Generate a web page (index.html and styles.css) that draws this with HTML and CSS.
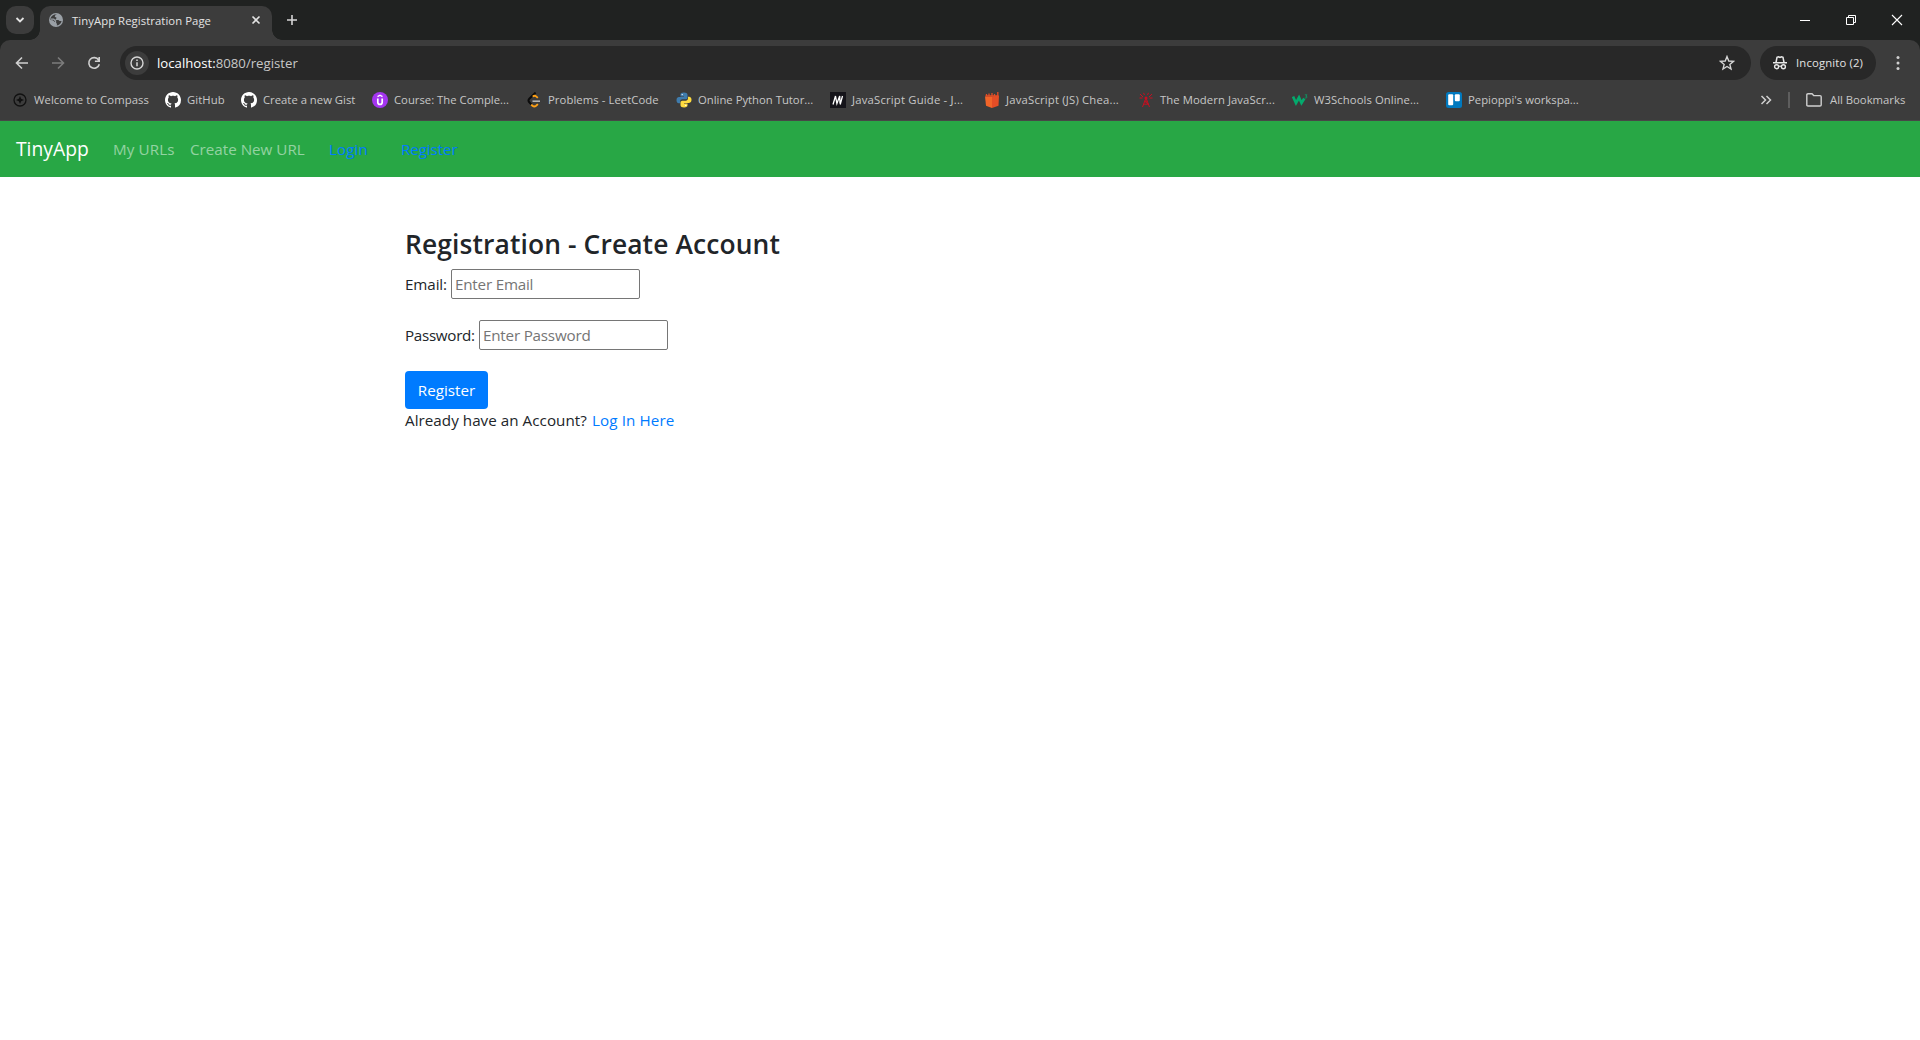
FILE: index.html
```html
<!DOCTYPE html>
<html lang="en">
<head>
<meta charset="utf-8">
<title>TinyApp Registration Page</title>
<link rel="stylesheet" href="styles.css">
</head>
<body>
<div class="browser">
  <div class="tabstrip">
    <div class="tab-search"><svg width="28" height="28" viewBox="0 0 28 28"><path d="M10.5 12l3.5 3.5 3.5-3.5" fill="none" stroke="#e3e3e3" stroke-width="1.8"/></svg></div>
    <div class="tab">
      <svg width="16" height="16" viewBox="0 0 16 16"><circle cx="8" cy="8" r="7" fill="#9aa0a6"/><path d="M8.8 2.5c-1 .6-2.2.9-2 1.9.1 1 1.9.4 1.7 1.6-.1 1-1.1.9-1.1 2h2.7c1.1 0 1 1.1 1.9 1.1h1.6c-.5 2.300-2.200 4.200-4.800 4.500v-1.900c-1.100 0-1.200-.6-1.200-1.500-1.500 0-1.600-1.700-3-1.900l-2.200-.2C2.200 4.600 5 1.900 8.800 2.500z" fill="#3c3c3c"/><path d="M2.700 7.200h2.800c1.100 0 .9 1.600 2 1.600v2c-.1 1 1 .8 1 1.800" fill="none" stroke="#9aa0a6" stroke-width="1.300"/></svg>
      <span class="tab-title">TinyApp Registration Page</span>
      <svg class="tab-close" width="10" height="10" viewBox="0 0 10 10"><path d="M1.500 1.500l7 7m0-7l-7 7" stroke="#e3e3e3" stroke-width="1.600"/></svg>
    </div>
    <svg class="new-tab" width="12" height="12" viewBox="0 0 12 12"><path d="M6 1v10M1 6h10" stroke="#d6d6d6" stroke-width="1.600"/></svg>
    <div class="window-buttons">
      <svg width="12" height="12" viewBox="0 0 12 12"><path d="M1 6.500h10" stroke="#fff"/></svg>
      <svg width="12" height="12" viewBox="0 0 12 12"><path d="M1.500 3.500h7v7h-7zM3.500 3.500v-2h7v7h-2" fill="none" stroke="#fff"/></svg>
      <svg width="12" height="12" viewBox="0 0 12 12"><path d="M1 1l10 10M11 1L1 11" stroke="#fff" stroke-width="1.100"/></svg>
    </div>
  </div>

  <div class="chrome-panel">
    <div class="toolbar">
      <div class="nav-buttons">
        <svg width="14" height="14" viewBox="0 0 14 14"><path d="M13 7H2M7 1.500L1.500 7 7 12.500" fill="none" stroke="#d0d0d0" stroke-width="1.600"/></svg>
        <svg width="14" height="14" viewBox="0 0 14 14"><path d="M1 7h11M7 1.500L12.500 7 7 12.500" fill="none" stroke="#7c7c7c" stroke-width="1.600"/></svg>
        <svg width="14" height="14" viewBox="0 0 14 14"><path d="M11.600 4A5.300 5.300 0 1 0 12.300 8.200M12.200 1v4.300H7.900" fill="none" stroke="#d0d0d0" stroke-width="1.600"/></svg>
      </div>
      <div class="omnibox">
        <span class="site-info"><svg width="14" height="14" viewBox="0 0 14 14"><circle cx="7" cy="7" r="6" fill="none" stroke="#d6d6d6" stroke-width="1.400"/><path d="M7 6.200v4M7 3.500v1.500" stroke="#d6d6d6" stroke-width="1.500"/></svg></span>
        <span class="url"><span class="host">localhost:</span>8080/register</span>
        <svg class="star" width="16" height="16" viewBox="0 0 16 16"><path d="M8 1.500l1.750 4.500 4.850.3-3.750 3.100 1.200 4.700L8 11.500l-4.050 2.600 1.200-4.700L1.400 6.300l4.850-.3z" fill="none" stroke="#d6d6d6" stroke-width="1.350"/></svg>
      </div>
      <div class="incognito">
        <svg width="14" height="14" viewBox="0 0 14 14"><path d="M0 6.700h14M3 6.500l1-5.200 1.500-.5 1.500.7 1.500-.7 1.500.5 1 5.200" fill="none" stroke="#e8e8e8" stroke-width="1.500"/><circle cx="3.600" cy="10.700" r="2" fill="none" stroke="#e8e8e8" stroke-width="1.400"/><circle cx="10.400" cy="10.700" r="2" fill="none" stroke="#e8e8e8" stroke-width="1.400"/><path d="M5.600 10.200h2.800" stroke="#e8e8e8" stroke-width="1.200"/></svg>
        <span>Incognito (2)</span>
      </div>
      <svg class="kebab" width="4" height="16" viewBox="0 0 4 16"><g fill="#d0d0d0"><circle cx="2" cy="2.500" r="1.500"/><circle cx="2" cy="8" r="1.500"/><circle cx="2" cy="13.500" r="1.500"/></g></svg>
    </div>

    <div class="bookmarks">
      <div class="bookmark-list">
        <div class="bookmark"><svg viewBox="0 0 16 16"><circle cx="8" cy="8" r="6" fill="none" stroke="#111" stroke-width="1.300"/><path d="M8 4l1.200 2.800L12 8 9.200 9.200 8 12 6.800 9.200 4 8l2.800-1.200z" fill="#111"/></svg><span class="loose">Welcome to Compass</span></div>
        <div class="bookmark"><svg viewBox="0 0 16 16"><use href="#github"/></svg><span class="loose">GitHub</span></div>
        <div class="bookmark"><svg viewBox="0 0 16 16"><path id="github" fill="#fff" d="M8 0C3.580 0 0 3.580 0 8c0 3.540 2.290 6.530 5.470 7.590.4.070.55-.17.55-.38 0-.19-.010-.82-.010-1.490-2.010.37-2.530-.49-2.690-.94-.090-.23-.48-.94-.82-1.130-.28-.15-.68-.52-.010-.53.63-.010 1.080.58 1.230.82.72 1.210 1.870.87 2.330.66.070-.52.28-.87.510-1.070-1.780-.2-3.640-.89-3.640-3.950 0-.87.310-1.590.82-2.150-.080-.2-.36-1.020.080-2.120 0 0 .67-.21 2.200.82.640-.18 1.320-.27 2-.27s1.360.090 2 .27c1.530-1.040 2.200-.82 2.200-.82.440 1.100.160 1.920.080 2.120.51.56.82 1.270.82 2.150 0 3.070-1.870 3.750-3.650 3.950.29.25.54.73.54 1.480 0 1.070-.010 1.930-.010 2.200 0 .21.15.46.55.38A8 8 0 0 0 16 8c0-4.420-3.580-8-8-8z"/></svg><span>Create a new Gist</span></div>
        <div class="bookmark"><svg viewBox="0 0 16 16"><circle cx="8" cy="8" r="8" fill="#a435f0"/><path d="M5.500 4.600L8 3.200l2.500 1.400" fill="none" stroke="#fff" stroke-width="1.300"/><path d="M5.800 6.500v3.700c0 3 4.400 3 4.400 0V6.500" fill="none" stroke="#fff" stroke-width="1.700"/></svg><span>Course: The Comple...</span></div>
        <div class="bookmark"><svg viewBox="0 0 16 16"><path d="M9.600.6L3.300 6.800q-1.600 1.700 0 3.400l2.200 2.400" fill="none" stroke="#0b0b0b" stroke-width="2"/><path d="M6.800 4.700q1.700-1.700 3.300-.3l1.700 1.500M5.200 12.600l1.300 1.200q1.800 1.400 3.600 0l1.800-1.700" fill="none" stroke="#ffa116" stroke-width="1.900"/><path d="M6.500 9.200H14" stroke="#b3b3b3" stroke-width="1.600"/></svg><span class="loose">Problems - LeetCode</span></div>
        <div class="bookmark"><svg viewBox="0 0 16 16"><path d="M7.900.5C5.400.5 4.500 1.400 4.500 2.700v1.700H8v.7H3C1.300 5.100.5 6.400.5 8.200c0 1.900 1 3 2.300 3h1.300V9.400c0-1.300 1-2.200 2.200-2.200h3.500c1 0 1.700-.8 1.700-1.800V2.700C11.500 1.200 10 .5 7.900.5z" fill="#3f7cad"/><path d="M15.500 7.800c0-1.800-.8-3.100-2.500-3.100h-1v1.900c0 1.200-1 2.200-2.200 2.200H6.300c-1 0-1.800.8-1.800 1.800v2.700c0 1.500 1.500 2.200 3.600 2.200 2.500 0 3.400-.9 3.400-2.200v-1.700H8v-.7h5c1.700 0 2.500-1.300 2.500-3.100z" fill="#ffdb3f"/><circle cx="6.200" cy="2.600" r=".7" fill="#fff"/><circle cx="9.800" cy="13.400" r=".7" fill="#fff"/></svg><span>Online Python Tutor...</span></div>
        <div class="bookmark"><svg viewBox="0 0 16 16"><path d="M0 0h16v16H0z" fill="#15141a"/><path d="M3 12.500L5.500 4l1.400 7.500L9.700 4l.3 7.500M10.200 12.500l2.300-8.500" fill="none" stroke="#fff" stroke-width="1.300"/></svg><span class="wide">JavaScript Guide - J...</span></div>
        <div class="bookmark"><svg viewBox="0 0 16 16"><path d="M1 4.500h7V16l-6-2.300z" fill="#f16529"/><path d="M8 4.500l7-1-.5 10.300L8 16z" fill="#e44d26"/><path d="M2.500 4V2M5 4V1.500M8 4V1M10.500 4V2M13.800 4V0M1.500 4h12" stroke="#e44d26" stroke-width="1.300"/></svg><span class="wide">JavaScript (JS) Chea...</span></div>
        <div class="bookmark"><svg viewBox="0 0 16 16"><path d="M8 6L4.500 15M8 6l3.500 9M6.500 9.200h3M5.500 12.200h5M6.500 9.200l4 3M2 2l3 3M14 2l-3 3M1.500 6h3M14.500 6h-3M5.500.8l1 2.200M10.500.8l-1 2.200" stroke="#c70f20" stroke-width="1" fill="none"/><circle cx="8" cy="6" r="1.500" fill="#c70f20"/></svg><span class="loose">The Modern JavaScr...</span></div>
        <div class="bookmark"><svg viewBox="0 0 16 16"><path d="M1 4.500l3 6.500 3-5.500 2.500 5.500 2.800-4.500" fill="none" stroke="#04aa6d" stroke-width="2.700"/><path d="M12.800 2.800H15l-1.200 1.400q1.800.2 1 1.500-.7.700-2 .1" fill="none" stroke="#04aa6d" stroke-width=".7"/></svg><span class="loose">W3Schools Online...</span></div>
        <div class="bookmark"><svg viewBox="0 0 16 16"><rect width="16" height="16" rx="2.500" fill="#0079bf"/><rect x="2.200" y="2.200" width="5" height="11" rx="1" fill="#fff"/><rect x="8.800" y="2.200" width="5" height="7" rx="1" fill="#fff"/></svg><span>Pepioppi's workspa...</span></div>
      </div>
      <svg class="more" width="12" height="10" viewBox="0 0 12 10"><path d="M1.500 1l4 4-4 4M6.500 1l4 4-4 4" fill="none" stroke="#d0d0d0" stroke-width="1.500"/></svg>
      <span class="divider"></span>
      <svg class="folder" width="16" height="14" viewBox="0 0 16 14"><path d="M.8 12V2q0-1.200 1.200-1.200h4l1.700 1.800H14q1.200 0 1.200 1.200V12q0 1-1.200 1H2Q.8 13 .8 12z" fill="none" stroke="#cfcfcf" stroke-width="1.400"/></svg>
      <span>All Bookmarks</span>
    </div>
  </div>
</div>

<nav class="navbar">
  <a class="brand">TinyApp</a>
  <a class="nav-link urls">My URLs</a>
  <a class="nav-link create">Create New URL</a>
  <a class="nav-action login">Login</a>
  <a class="nav-action">Register</a>
</nav>

<main class="content">
  <h3>Registration - Create Account</h3>
  <form>
    <div class="field"><label class="email-label" for="email">Email:</label><input id="email" type="email" placeholder="Enter Email"></div>
    <div class="field"><label class="password-label" for="password">Password:</label><input id="password" type="password" placeholder="Enter Password"></div>
    <button type="button">Register</button>
  </form>
  <p class="signin"><span>Already have an Account?</span><a>Log In Here</a></p>
</main>
</body>
</html>
```
FILE: styles.css
```css
* { box-sizing: border-box; }
body { margin: 0; background: #fff; color: #212529; font: 15.2px/24px "Open Sans", sans-serif; }
svg { display: block; flex: none; }
span, a, label { white-space: nowrap; }

.browser { height: 121px; background: #202221; color: #e3e3e3; font-size: 11.3px; }
.tabstrip { display: flex; height: 40px; padding: 6px 13px 0 6px; }
.tab-search { width: 28px; height: 28px; border-radius: 10px; background: #3c3c3c; margin-right: 6px; }
.tab { position: relative; display: flex; align-items: center; width: 232px; height: 34px; padding: 0 11px 6px 8px; border-radius: 10px 10px 0 0; background: #3c3c3c; }
.tab::before, .tab::after { content: ""; position: absolute; bottom: 0; width: 10px; height: 10px; }
.tab::before { left: -10px; background: radial-gradient(circle at 0 0, transparent 9.5px, #3c3c3c 10px); }
.tab::after { right: -10px; background: radial-gradient(circle at 100% 0, transparent 9.5px, #3c3c3c 10px); }
.tab-title { margin-left: 8px; padding-top: 1px; letter-spacing: .07px; }
.tab-close { margin-left: auto; }
.new-tab { margin: 8px 0 0 14px; }
.window-buttons { display: flex; gap: 34px; margin: 8px 0 0 auto; padding-right: 4px; }

.chrome-panel { height: 81px; border-radius: 10px 10px 0 0; background: #3c3c3c; border-bottom: 1px solid #474747; }
.toolbar { display: flex; align-items: center; height: 46px; }
.nav-buttons { display: flex; gap: 22px; width: 120px; padding-left: 15px; }
.omnibox { display: flex; align-items: center; width: 1631px; height: 34px; padding: 0 16px 0 5px; border-radius: 17px; background: #282828; font-size: 13.2px; color: #c7c7c7; }
.site-info { display: grid; place-items: center; width: 24px; height: 24px; border-radius: 50%; background: #3c3c3c; margin-right: 8px; }
.host { color: #fff; }
.star { margin-left: auto; }
.incognito { display: flex; align-items: center; gap: 9px; width: 116px; height: 34px; margin-left: 9px; padding-left: 13px; border-radius: 17px; background: #282828; letter-spacing: .15px; }
.kebab { margin-left: 20px; }

.bookmarks { display: flex; align-items: center; height: 28px; padding-left: 12px; color: #c7c7c7; }
.bookmark-list { display: grid; grid-template-columns: 153px 76px 131px 154px 150px repeat(6, 154px); width: 1748px; }
.bookmark { display: flex; align-items: center; gap: 6px; }
.bookmark svg { width: 16px; height: 16px; }
.loose { letter-spacing: .07px; }
.wide { letter-spacing: .19px; }
.divider { width: 2px; height: 16px; margin: 0 16px; background: #5e5e5e; }
.folder { margin-right: 8px; }

.navbar { display: flex; align-items: center; height: 56px; padding: 0 16px; background: #28a745; }
.navbar .brand { width: 97px; color: #fff; font-size: 19.3px; line-height: 30px; }
.nav-link { color: rgba(255, 255, 255, .5); }
.urls { width: 77px; letter-spacing: .1px; }
.create { width: 139px; }
.nav-action { color: #007bff; letter-spacing: -.1px; }
.login { width: 72px; letter-spacing: .1px; }

.content { padding: 50px 0 0 405px; }
h3 { margin: 0 0 8px; padding-top: 1px; font-size: 26.4px; font-weight: 600; line-height: 33px; letter-spacing: .11px; }
.field { display: flex; align-items: center; height: 30px; margin-bottom: 21px; }
.field label { padding-bottom: 1px; }
.email-label { width: 46px; letter-spacing: -.1px; }
.password-label { width: 74px; letter-spacing: -.3px; }
input { width: 189px; height: 30px; padding: 1px 3px 2px; border: 1px solid #767676; border-radius: 2px; font: inherit; color: #212529; letter-spacing: -.2px; }
input::placeholder { color: #757575; }
button { display: block; width: 83px; height: 38px; padding: 0 0 1px; border: 0; border-radius: 4px; background: #007bff; color: #fff; font: inherit; }
.signin { display: flex; margin: -1px 0 0; }
.signin span { width: 187px; letter-spacing: .04px; }
.signin a { color: #007bff; letter-spacing: .1px; }
```
